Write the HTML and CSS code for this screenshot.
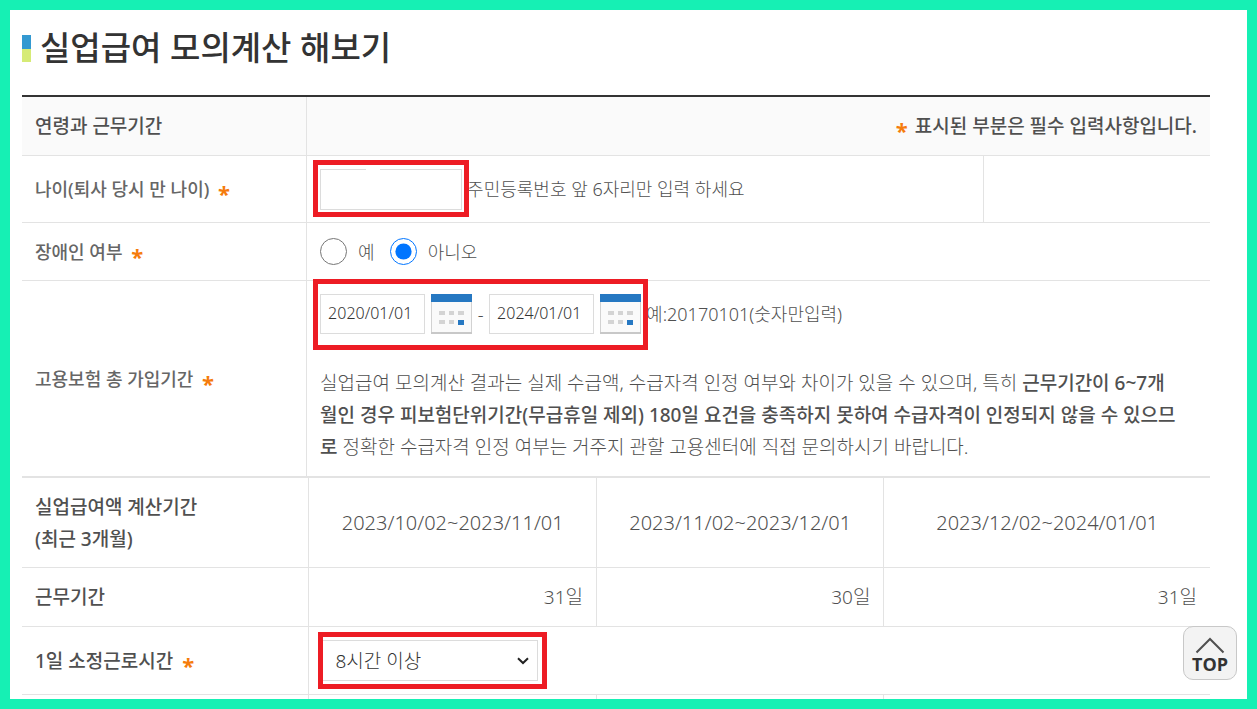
FILE: index.html
```html
<!DOCTYPE html>
<html lang="ko">
<head>
<meta charset="utf-8">
<meta name="viewport" content="width=device-width, initial-scale=1">
<title>실업급여 모의계산 해보기</title>
<link rel="stylesheet" href="styles.css">
</head>
<body>
<main class="frame">
  <h1 class="title">실업급여 모의계산 해보기</h1>
  <form class="calc">
    <table class="grid grid-main">
      <colgroup><col class="c-label"><col class="c-field"><col></colgroup>
      <thead>
        <tr>
          <th scope="col">연령과 근무기간</th>
          <th scope="col" colspan="2" class="right"><span class="req">*</span> 표시된 부분은 필수 입력사항입니다.</th>
        </tr>
      </thead>
      <tbody>
        <tr class="row-age">
          <th scope="row"><label for="age">나이(퇴사 당시 만 나이)</label> <span class="req">*</span></th>
          <td>
            <div class="line">
              <span class="mark mark-age"><input class="box age" id="age" type="text"></span>
              <span>주민등록번호 앞 6자리만 입력 하세요</span>
            </div>
          </td>
          <td></td>
        </tr>
        <tr class="row-radio">
          <th scope="row">장애인 여부 <span class="req">*</span></th>
          <td colspan="2">
            <div class="line radios">
              <label><input type="radio" name="disabled">예</label>
              <label><input type="radio" name="disabled" checked>아니오</label>
            </div>
          </td>
        </tr>
        <tr class="row-period">
          <th scope="row">고용보험 총 가입기간 <span class="req">*</span></th>
          <td colspan="2">
            <div class="line">
              <span class="mark mark-dates">
                <input class="box date" type="text" value="2020/01/01" aria-label="가입 시작일">
                <button class="cal" type="button" aria-label="시작일 달력">
                  <svg width="41" height="40" viewBox="0 0 41 40"><path d="M.5.5h40v39H.5z" fill="#fafafa" stroke="#d2d2d2"/><path d="M0 39h41" stroke="#c8c8c8" stroke-width="2"/><path d="M0 0h41v8H0z" fill="#2678c2"/><path d="M8 17h6v4H8zM18 17h5v4h-5zM27 17h6v4h-6zM8 26h6v4H8zM18 26h5v4h-5z" fill="#d4d4d4"/><path d="M27 26h6v5h-6z" fill="#2678c2"/></svg>
                </button>
                <span class="dash">-</span>
                <input class="box date" type="text" value="2024/01/01" aria-label="가입 종료일">
                <button class="cal" type="button" aria-label="종료일 달력">
                  <svg width="41" height="40" viewBox="0 0 41 40"><path d="M.5.5h40v39H.5z" fill="#fafafa" stroke="#d2d2d2"/><path d="M0 39h41" stroke="#c8c8c8" stroke-width="2"/><path d="M0 0h41v8H0z" fill="#2678c2"/><path d="M8 17h6v4H8zM18 17h5v4h-5zM27 17h6v4h-6zM8 26h6v4H8zM18 26h5v4h-5z" fill="#d4d4d4"/><path d="M27 26h6v5h-6z" fill="#2678c2"/></svg>
                </button>
              </span>
              <span>예:20170101(숫자만입력)</span>
            </div>
            <p class="note">실업급여 모의계산 결과는 실제 수급액, 수급자격 인정 여부와 차이가 있을 수 있으며, 특히 <b>근무기간이 6~7개<br>월인 경우 피보험단위기간(무급휴일 제외) 180일 요건을 충족하지 못하여 수급자격이 인정되지 않을 수 있으므<br>로</b> 정확한 수급자격 인정 여부는 거주지 관할 고용센터에 직접 문의하시기 바랍니다.</p>
          </td>
        </tr>
      </tbody>
    </table>
    <table class="grid grid-sub">
      <colgroup><col class="c-q"><col class="c-q"><col class="c-q"><col></colgroup>
      <tbody>
        <tr class="row-range">
          <th scope="row">실업급여액 계산기간<br>(최근 3개월)</th>
          <td class="center">2023/10/02~2023/11/01</td>
          <td class="center">2023/11/02~2023/12/01</td>
          <td class="center">2023/12/02~2024/01/01</td>
        </tr>
        <tr class="row-days">
          <th scope="row">근무기간</th>
          <td class="right">31일</td>
          <td class="right">30일</td>
          <td class="right">31일</td>
        </tr>
        <tr class="row-hours">
          <th scope="row"><label for="hours">1일 소정근로시간</label> <span class="req">*</span></th>
          <td colspan="3">
            <span class="mark mark-hours">
              <select class="box hours" id="hours"><option>8시간 이상</option></select>
              <svg class="chev" width="12" height="8" viewBox="0 0 12 8"><path d="M1 1.200l5 4.800 5-4.800" fill="none" stroke="#222" stroke-width="2"/></svg>
            </span>
          </td>
        </tr>
        <tr class="row-next"><th></th><td></td><td></td><td></td></tr>
      </tbody>
    </table>
  </form>
  <a class="top" href="#">
    <svg width="30" height="17" viewBox="0 0 30 17"><path d="M1.500 15.500L15 2l13.500 13.500" fill="none" stroke="#505050" stroke-width="2"/></svg>
    <span>TOP</span>
  </a>
</main>
</body>
</html>
```
FILE: styles.css
```css
* { box-sizing: border-box; }

body {
  margin: 0;
  font-family: "Noto Sans", "Noto Sans CJK KR", sans-serif;
  font-size: 19px;
  font-weight: 300;
  line-height: 32px;
  color: #505050;
}

.frame {
  position: relative;
  height: 100vh;
  overflow: hidden;
  padding: 12px 37px 0 12px;
  border: 10px solid #16f0b4;
  background: #fff;
}

.title {
  display: flex;
  align-items: center;
  gap: 9px;
  margin: 0 0 21px;
  font-size: 33px;
  font-weight: 500;
  line-height: 52px;
  color: #333;
}

.title::before {
  content: "";
  width: 9px;
  height: 27px;
  background: linear-gradient(#3399d1 50%, #d6eb76 50%);
}

.grid {
  width: 100%;
  table-layout: fixed;
  border-collapse: separate;
  border-spacing: 0;
}

.grid-main { border-top: 2px solid #333; }
.grid-sub { border-top: 1px solid #e3e3e3; }
.c-label { width: 24%; }
.c-field { width: 57%; }
.c-q { width: 24.2%; }

th, td {
  padding: 0 13px;
  border-right: 1px solid #e3e3e3;
  border-bottom: 1px solid #e3e3e3;
  text-align: left;
}

th { font-weight: 500; }
tr > :last-child { border-right: 0; }
thead th { height: 59px; background: #fafafa; }
.grid .right { text-align: right; }
.center { text-align: center; font-size: 20px; }

.req {
  display: inline-block;
  margin: 0 2px 0 4px;
  font-family: "Open Sans", sans-serif;
  font-size: 22px;
  font-weight: 700;
  line-height: 20px;
  vertical-align: -6px;
  color: #f57c0c;
}

.grid-main tbody th { font-size: 18px; color: #666; }
.row-age > * { height: 67px; }
.row-radio > * { height: 58px; }
.row-period > * { height: 196px; }
.row-range > * { height: 90px; }
.row-days > * { height: 59px; }
.row-hours > * { height: 68px; }
.row-next > * { height: 60px; }

.line {
  display: flex;
  align-items: center;
  gap: 5px;
  font-size: 18px;
}

.mark {
  position: relative;
  display: inline-flex;
  align-items: center;
}

/* Highlight drawn over the cell borders around a control */
.mark::after {
  content: "";
  position: absolute;
  border: 5px solid #ed1c24;
  pointer-events: none;
}

/* Masked stretch of the input's top border */
.mark-age::before {
  content: "";
  position: absolute;
  top: 0;
  left: 46px;
  width: 14px;
  height: 1px;
  background: #fff;
}

.mark-age::after { inset: -9px -7px -7px; }
.mark-dates::after { inset: -15px -7px -16px; }
.mark-hours::after { inset: -8px -9px -8px -2px; }

.box {
  margin: 0;
  border: 1px solid #dcdcdc;
  border-radius: 0;
  background: #fff;
  font: inherit;
  color: #333;
}

.age { width: 142px; height: 41px; padding: 0 8px; }
.date { width: 105px; height: 40px; padding: 0 7px 2px; font-size: 16px; }
.dash { width: 17px; text-align: center; }

.cal {
  display: block;
  width: 41px;
  height: 40px;
  margin-left: 6px;
  padding: 0;
  border: 0;
  background: none;
}

.cal svg { display: block; }

.radios { gap: 15px; }
.radios label { display: flex; align-items: center; gap: 11px; }
.radios input { width: 27px; height: 27px; margin: 0; accent-color: #0075ff; }

.note { margin: 33px -13px 0 0; }
.note b { font-weight: 500; }

.mark-hours { display: flex; width: 218px; margin-left: -2px; }
.hours { width: 100%; height: 41px; padding: 0 14px; appearance: none; }
.chev { position: absolute; right: 9px; pointer-events: none; }

.top {
  position: absolute;
  right: 10px;
  bottom: 19px;
  display: flex;
  flex-direction: column;
  align-items: center;
  width: 54px;
  height: 54px;
  padding-top: 10px;
  border: 1px solid #c8c8c8;
  border-radius: 10px;
  background: #f3f3f3;
  color: #333;
  font-family: "Open Sans", sans-serif;
  font-size: 18px;
  font-weight: 700;
  line-height: 20px;
  text-decoration: none;
}
```
